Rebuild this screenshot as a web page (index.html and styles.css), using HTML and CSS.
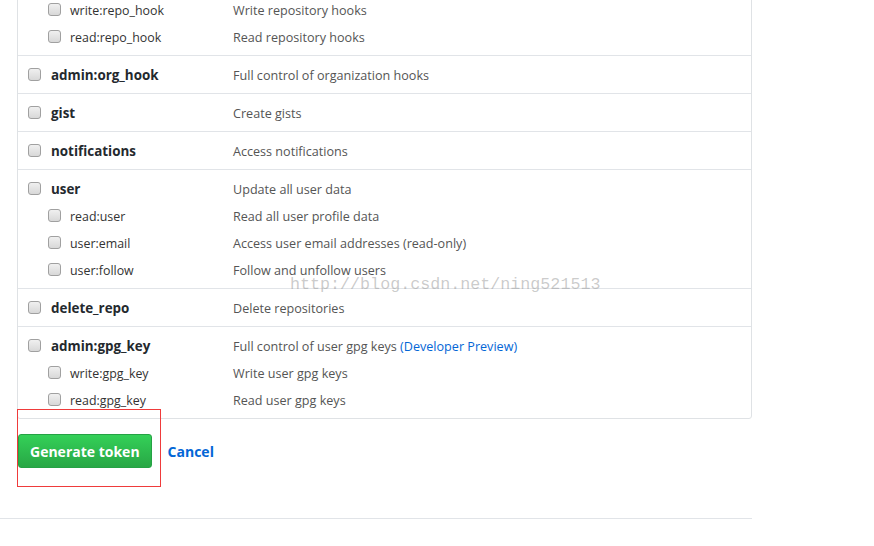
FILE: index.html
```html
<!DOCTYPE html>
<html lang="en">
<head>
<meta charset="UTF-8">
<meta name="viewport" content="width=device-width, initial-scale=1.0">
<title>New personal access token</title>
<link rel="stylesheet" href="styles.css">
</head>
<body>
<div class="page">
    <div class="scopes">
        <div class="scope">
            <div class="line">
                <label class="name"><input type="checkbox">admin:repo_hook</label>
                <span class="desc">Full control of repository hooks</span>
            </div>
            <div class="line sub">
                <label class="name"><input type="checkbox">write:repo_hook</label>
                <span class="desc">Write repository hooks</span>
            </div>
            <div class="line sub">
                <label class="name"><input type="checkbox">read:repo_hook</label>
                <span class="desc">Read repository hooks</span>
            </div>
        </div>
        <div class="scope">
            <div class="line">
                <label class="name"><input type="checkbox">admin:org_hook</label>
                <span class="desc">Full control of organization hooks</span>
            </div>
        </div>
        <div class="scope">
            <div class="line">
                <label class="name"><input type="checkbox">gist</label>
                <span class="desc">Create gists</span>
            </div>
        </div>
        <div class="scope">
            <div class="line">
                <label class="name"><input type="checkbox">notifications</label>
                <span class="desc">Access notifications</span>
            </div>
        </div>
        <div class="scope">
            <div class="line">
                <label class="name"><input type="checkbox">user</label>
                <span class="desc">Update all user data</span>
            </div>
            <div class="line sub">
                <label class="name"><input type="checkbox">read:user</label>
                <span class="desc">Read all user profile data</span>
            </div>
            <div class="line sub">
                <label class="name"><input type="checkbox">user:email</label>
                <span class="desc">Access user email addresses (read-only)</span>
            </div>
            <div class="line sub">
                <label class="name"><input type="checkbox">user:follow</label>
                <span class="desc">Follow and unfollow users</span>
            </div>
        </div>
        <div class="scope">
            <div class="line">
                <label class="name"><input type="checkbox">delete_repo</label>
                <span class="desc">Delete repositories</span>
            </div>
        </div>
        <div class="scope">
            <div class="line">
                <label class="name"><input type="checkbox">admin:gpg_key</label>
                <span class="desc">Full control of user gpg keys <a href="#">(Developer Preview)</a></span>
            </div>
            <div class="line sub">
                <label class="name"><input type="checkbox">write:gpg_key</label>
                <span class="desc">Write user gpg keys</span>
            </div>
            <div class="line sub">
                <label class="name"><input type="checkbox">read:gpg_key</label>
                <span class="desc">Read user gpg keys</span>
            </div>
        </div>
    </div>

    <div class="actions">
        <button class="btn-primary">Generate token</button>
        <a class="cancel" href="#">Cancel</a>
        <div class="mark"></div>
    </div>

    <hr class="rule">

    <div class="watermark">http://blog.csdn.net/ning521513</div>
</div>
</body>
</html>
```

FILE: styles.css
```css
body {
    margin: 0;
    background: #fff;
    font-family: "Open Sans", "Noto Sans", sans-serif;
    font-size: 13px;
    color: #24292e;
}
.page {
    position: relative;
    width: 752px;
    margin-top: -37px;
}
.scopes {
    margin-left: 17px;
    border: 1px solid #dfe2e5;
    border-radius: 0 0 3px 3px;
}
.scope {
    padding: 10px 10px 9px;
    border-top: 1px solid #e1e4e8;
}
.scope:first-child {
    border-top: 0;
}
.line {
    display: grid;
    grid-template-columns: 205px 1fr;
    align-items: center;
    height: 18px;
}
.line.sub {
    margin-top: 9px;
}
.name {
    display: flex;
    align-items: center;
    font-size: 13.4px;
    font-weight: 700;
    color: #24292e;
}
.sub .name {
    padding-left: 20px;
    font-size: 12.4px;
    font-weight: 400;
    color: #333;
}
.sub .name input {
    margin-right: 9px;
}
.desc {
    color: #555;
    font-size: 12.6px;
}
.desc a {
    color: #0366d6;
    text-decoration: none;
}
input[type=checkbox] {
    -webkit-appearance: none;
    appearance: none;
    width: 13px;
    height: 13px;
    margin: 0 10px 2px 0;
    border: 1px solid #a0a0a0;
    border-radius: 3px;
    background: linear-gradient(#f0f0f0, #d8d8d8);
    flex: none;
}
.actions {
    position: relative;
    display: flex;
    align-items: center;
    gap: 16px;
    margin: 15px 0 0 18px;
    height: 34px;
}
.btn-primary {
    height: 34px;
    padding: 0 11px;
    border: 1px solid #25a244;
    border-radius: 3px;
    background: linear-gradient(#34d058, #28a745);
    color: #fff;
    font-family: inherit;
    font-size: 14px;
    font-weight: 700;
}
.cancel {
    color: #0366d6;
    font-size: 14px;
    font-weight: 700;
    text-decoration: none;
}
.mark {
    position: absolute;
    left: -1px;
    top: -25px;
    width: 142px;
    height: 76px;
    border: 1px solid #ef3b3b;
}
.rule {
    margin: 50px 0 0;
    border: 0;
    border-top: 1px solid #e1e4e8;
}
.watermark {
    position: absolute;
    left: 290px;
    top: 312px;
    font-family: "Liberation Mono", monospace;
    font-size: 16.7px;
    color: rgba(140, 140, 140, 0.45);
    pointer-events: none;
}
```
